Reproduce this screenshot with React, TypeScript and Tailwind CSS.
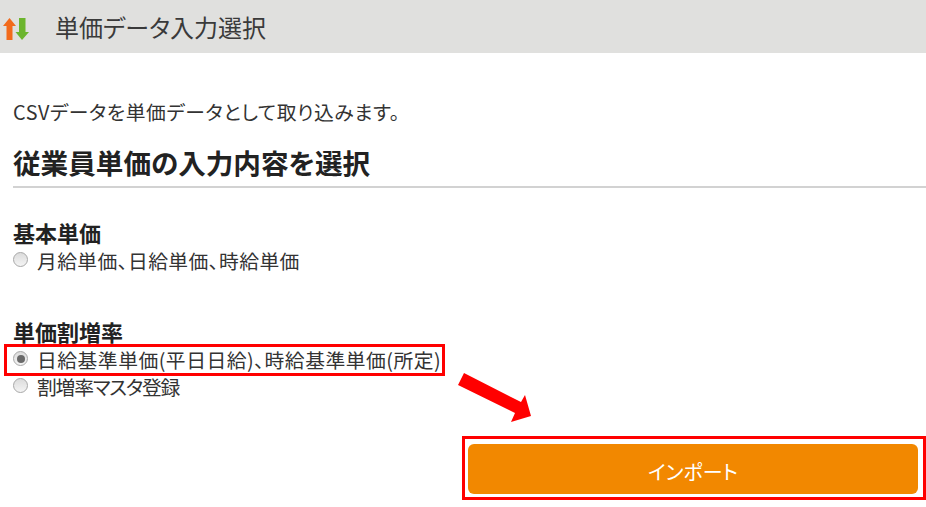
const font = { fontFamily: '"Noto Sans CJK JP", "Liberation Sans", sans-serif' }

function Radio({ checked = false }: { checked?: boolean }) {
  return (
    <span className="mb-[3px] flex h-[15px] w-[15px] shrink-0 items-center justify-center rounded-full border border-[#a8a8a8] bg-gradient-to-b from-[#dcdcdc] to-[#f4f4f4]">
      {checked && <span className="h-[8px] w-[8px] rounded-full bg-[#6a6a6a]" />}
    </span>
  )
}

function Option({ label, checked, spacing }: { label: string; checked?: boolean; spacing: string }) {
  return (
    <div className="flex h-[22px] items-center gap-[9px] whitespace-nowrap text-[19.8px] leading-[22px] text-[#333] [font-feature-settings:'palt']">
      <Radio checked={checked} />
      <span className={spacing}>{label}</span>
    </div>
  )
}

export default function App() {
  return (
    <div className="h-[507px] w-[926px] overflow-hidden bg-white" style={font}>
      <header className="flex h-[53px] items-center bg-[#e0e0de]">
        <svg className="ml-[2px] mt-[4px] h-[24px] w-[28px]" viewBox="0 0 28 24">
          <path d="M7.5 1 L14 9 L10.5 9 L10.5 23 L4.5 23 L4.5 9 L1 9 Z" fill="#f26a1b" />
          <path d="M20 23 L27 15 L23.5 15 L23.5 1 L17 1 L17 15 L13.5 15 Z" fill="#6cb52d" />
        </svg>
        <h1 className="ml-[25px] text-[24px] font-normal text-[#3a3a3a] [font-feature-settings:'palt']">単価データ入力選択</h1>
      </header>

      <div className="pl-[13px]">
        <p className="mt-[44px] h-[30px] text-[19.8px] leading-[30px] tracking-[0.55px] text-[#333] [font-feature-settings:'palt']">CSVデータを単価データとして取り込みます。</p>
        <h2 className="mt-[16px] h-[38px] text-[27.6px] font-bold leading-[38px] text-[#222] [font-feature-settings:'palt']">従業員単価の入力内容を選択</h2>
        <div className="mt-[5px] h-[2px] bg-[#d2d2d2]" />

        <div className="mb-[5px] mt-[31px] text-[22px] font-bold leading-[26px] text-[#222]">基本単価</div>
        <div className="h-[23px]">
          <Option label="月給単価、日給単価、時給単価" spacing="tracking-[0.4px]" />
        </div>

        <div className="mt-[46px] text-[22px] font-bold leading-[25px] text-[#222]">単価割増率</div>
      </div>

      <div className="ml-[4px] flex h-[32px] w-[441px] items-center border-[3px] border-[#f00] pl-[6px]">
        <Option label="日給基準単価(平日日給)、時給基準単価(所定)" spacing="tracking-[0.5px]" checked />
      </div>
      <div className="pl-[13px]">
        <Option label="割増率マスタ登録" spacing="tracking-[-1.2px]" />
      </div>

      <div className="relative">
        <svg className="absolute left-[455px] top-[-26px] h-[60px] w-[80px]" viewBox="0 0 80 60">
          <polygon points="9,1 3,13 60,41 56,50 76,44 70,23 66,30" fill="#f00" />
        </svg>
      </div>

      <div className="ml-[462px] mt-[38px] flex h-[64px] items-center justify-center border-[3px] border-[#f00]">
        <button className="mr-[2px] mt-[2px] h-[50px] w-[450px] rounded-[6px] bg-[#f28800] pt-[6px] text-[20px] text-white [font-feature-settings:'palt']">インポート</button>
      </div>
    </div>
  )
}
